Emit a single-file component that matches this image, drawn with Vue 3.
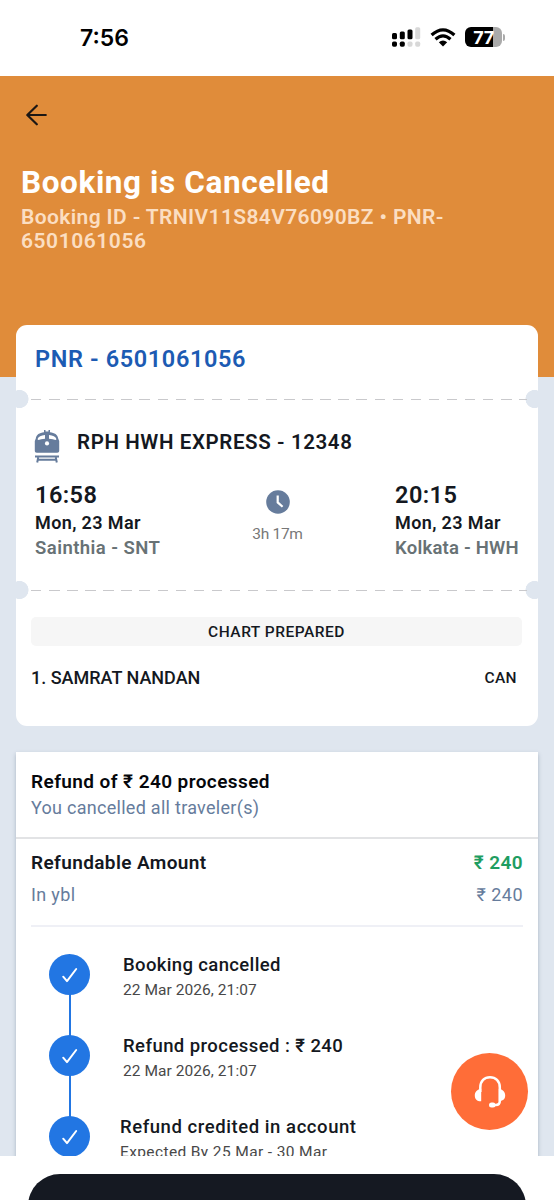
<script setup>
const stops = [
  { time: '16:58', date: 'Mon, 23 Mar', place: 'Sainthia - SNT' },
  { time: '20:15', date: 'Mon, 23 Mar', place: 'Kolkata - HWH' },
]
const steps = [
  { title: 'Booking cancelled', note: '22 Mar 2026, 21:07', key: 'cancelled' },
  { title: 'Refund processed : ₹ 240', note: '22 Mar 2026, 21:07', key: 'processed' },
  { title: 'Refund credited in account', note: 'Expected By 25 Mar - 30 Mar', key: 'credited' },
]
</script>

<template>
  <div class="screen">
    <div class="status">
      <span class="clock">7:56</span>
      <div class="indicators">
        <svg class="signal" width="29" height="20" viewBox="0 0 29 20">
          <rect x="0" y="6" width="5" height="6.3" rx="1.5" />
          <rect x="7.8" y="4.4" width="5" height="7.9" rx="1.5" />
          <rect x="15.5" y="2.4" width="5" height="9.9" rx="1.5" />
          <rect class="off" x="23.2" y="0.2" width="5" height="12" rx="1.5" />
          <rect x="0" y="14.6" width="5" height="5.2" rx="1.7" />
          <rect x="7.8" y="14.6" width="5" height="5.2" rx="1.7" />
          <rect class="off" x="15.5" y="14.6" width="5" height="5.2" rx="1.7" />
          <rect class="off" x="23.2" y="14.6" width="5" height="5.2" rx="1.7" />
        </svg>
        <svg class="wifi" width="26" height="19" viewBox="0 0 26 19">
          <path d="M1.600 7Q13-3.400 24.400 7" />
          <path d="M5.500 11.200Q13 4.400 20.500 11.200" />
          <path class="dot" d="M8.800 14.200Q13 10.600 17.200 14.200L13 18.400Z" />
        </svg>
        <div class="battery"><span class="level">77</span></div>
        <i class="nub"></i>
      </div>
    </div>

    <header class="hero">
      <svg class="back" width="22" height="22" viewBox="0 0 22 22">
        <path d="M10.800 1.700L1.300 11L10.800 20.300M1.500 11H19.800" />
      </svg>
      <h1>Booking is Cancelled</h1>
      <p class="ids"><span class="id1">Booking ID - TRNIV11S84V76090BZ • PNR-</span><br /><span class="id2">6501061056</span></p>
    </header>

    <main class="body">
      <section class="ticket">
        <div class="pnr"><span>PNR - 6501061056</span></div>
        <div class="perforation"></div>
        <div class="journey">
          <div class="train">
            <svg width="26" height="33" viewBox="0 0 26 33">
              <path class="fill" d="M10 0h1.500v1.600h3V0H16v2.200C20.500 2.700 23.700 4.600 24.200 8.500L25.200 11v9.800c0 1.300-.7 2-2 2H2.800c-1.300 0-2-.7-2-2V11l1-2.500C2.300 4.600 5.500 2.700 10 2.200Z" />
              <path class="glass" d="M3.800 10V8.600C4.500 6.400 7 5.200 11 4.900v3.800C8.200 9 6 9.400 3.800 10ZM22.200 10V8.600C21.500 6.400 19 5.200 15 4.900v3.800c2.800.3 5 .7 7.200 1.300Z" />
              <circle class="glass" cx="13" cy="13.400" r="2.100" />
              <path class="line" d="M1 26.400h24M3.200 32.500l1-5M22.800 32.500l-1-5M4 29.800h18" />
            </svg>
            <span>RPH HWH EXPRESS - 12348</span>
          </div>
          <div class="stops">
            <div class="stop from">
              <span class="time">{{ stops[0].time }}</span>
              <span class="date">{{ stops[0].date }}</span>
              <span class="place">{{ stops[0].place }}</span>
            </div>
            <div class="duration">
              <svg width="24" height="24" viewBox="0 0 24 24">
                <circle cx="12" cy="12" r="11.800" />
                <path d="M11.700 5.500v6.900l4.900 4.400" />
              </svg>
              <span>3h 17m</span>
            </div>
            <div class="stop to">
              <span class="time">{{ stops[1].time }}</span>
              <span class="date">{{ stops[1].date }}</span>
              <span class="place">{{ stops[1].place }}</span>
            </div>
          </div>
        </div>
        <div class="perforation"></div>
        <div class="chart"><span>CHART PREPARED</span></div>
        <div class="passenger">
          <span class="name">1. SAMRAT NANDAN</span>
          <span class="state">CAN</span>
        </div>
      </section>

      <section class="refund">
        <div class="summary">
          <div class="headline">Refund of ₹ 240 processed</div>
          <div class="sub">You cancelled all traveler(s)</div>
        </div>
        <div class="amounts">
          <div class="row total"><span>Refundable Amount</span><b>₹ 240</b></div>
          <div class="row part"><span>In ybl</span><em>₹ 240</em></div>
        </div>
        <ol class="timeline">
          <li v-for="s in steps" :key="s.key" :class="s.key">
            <div class="marker">
              <svg width="41" height="41" viewBox="0 0 41 41">
                <circle cx="20.5" cy="20.5" r="20.5" />
                <path d="M14.200 22.700L18 27.100L27.200 15" />
              </svg>
            </div>
            <div class="text">
              <span class="title">{{ s.title }}</span>
              <span class="note">{{ s.note }}</span>
            </div>
          </li>
        </ol>
      </section>

      <button class="help" aria-label="Help">
        <svg width="34" height="34" viewBox="0 0 34 34">
          <path class="band" d="M7.300 17V12.500C7.300 6 11.400 2.300 17 2.300s9.800 3.700 9.800 10.200V26c0 2.700-1.300 4-4 4h-4" />
          <path class="cup" d="M8.200 14v12.300C4.300 26.500 1.800 24.200 1.800 20.500S4.300 14.300 8.200 14ZM25.800 14v12.300c3.900-.2 6.400-2.100 6.400-5.800s-2.500-6.200-6.400-6.500Z" />
          <rect class="cup" x="16" y="27.500" width="6.500" height="5" rx="2.500" />
        </svg>
      </button>
    </main>

    <footer class="dock"><div class="sheet"></div></footer>
  </div>
</template>

<style>
body {
  background: #fff;
}
</style>

<style scoped>
* {
  box-sizing: border-box;
}
.screen {
  width: 554px;
  height: 1200px;
  overflow: hidden;
  display: flex;
  flex-direction: column;
  font-family: Roboto, 'Noto Sans', sans-serif;
  font-weight: 500;
  color: #141821;
  background: #fff;
  white-space: nowrap;
}
.status {
  height: 76px;
  flex: none;
  display: flex;
  justify-content: space-between;
  padding: 27px 49px 0 80px;
}
.clock {
  font: 600 23px/22px Inter, sans-serif;
  color: #000;
}
.indicators {
  display: flex;
  height: 20px;
  align-items: center;
}
.signal .off {
  fill: #d8d8d8;
}
.wifi {
  margin: 0 9px 0 9px;
}
.wifi path {
  fill: none;
  stroke: #000;
  stroke-width: 3.200;
}
.wifi .dot {
  fill: #000;
  stroke: none;
}
.battery {
  width: 37px;
  height: 20px;
  border-radius: 6px;
  background: linear-gradient(90deg, #000 28px, #aaa 28px);
  text-align: center;
}
.level {
  display: block;
  font: 700 18px/21px Inter, sans-serif;
  letter-spacing: -0.500px;
  color: #fff;
}
.nub {
  width: 2px;
  height: 7px;
  margin-left: 1px;
  border-radius: 0 2px 2px 0;
  background: #aaa;
}
.hero {
  height: 301px;
  flex: none;
  background: #e08c3a;
  padding: 28px 21px 0;
}
.back {
  display: block;
  margin-left: 5px;
}
.back path {
  fill: none;
  stroke: #1c1714;
  stroke-width: 2.200;
  stroke-linecap: round;
  stroke-linejoin: round;
}
h1 {
  margin: 38px 0 0;
  font-size: 31.500px;
  line-height: 37px;
  font-weight: 700;
  letter-spacing: 0.600px;
  color: #fff;
}
.ids {
  margin: 4px 0 0;
  font-size: 21px;
  line-height: 24px;
  color: #fbdec2;
  font-weight: 600;
}
.id1 {
  letter-spacing: 0.380px;
}
.id2 {
  letter-spacing: 0.550px;
}
.body {
  height: 831px;
  flex: none;
  position: relative;
  overflow: hidden;
  display: flex;
  flex-direction: column;
  gap: 26px;
  margin-top: -52px;
  padding: 0 16px;
  background: linear-gradient(transparent 52px, #dfe6ef 52px);
}
.ticket {
  height: 401px;
  flex: none;
  background: #fff;
  border-radius: 11px;
}
.pnr {
  height: 65px;
  padding: 20px 19px 0;
  font-size: 23.500px;
  line-height: 29px;
  font-weight: 600;
  letter-spacing: 0.620px;
  color: #1c5bb3;
}
.perforation {
  height: 18px;
  display: flex;
  align-items: center;
  background:
    radial-gradient(circle at 3.500px 9px, #dfe6ef 8.700px, transparent 9.300px),
    radial-gradient(circle at 518.500px 9px, #dfe6ef 8.700px, transparent 9.300px);
}
.perforation::before {
  content: '';
  height: 1px;
  width: 496px;
  margin-left: 15px;
  margin-top: 1px;
  background: repeating-linear-gradient(90deg, #c9c9cc 0 10.500px, transparent 10.500px 18.080px);
}
.journey {
  height: 173px;
  padding: 19px 19px 0;
}
.train {
  display: flex;
  align-items: center;
  height: 34px;
  gap: 17px;
  margin-left: -1px;
  font-size: 20.500px;
  line-height: 28px;
  font-weight: 600;
  letter-spacing: 0.610px;
}
.train svg {
  margin-top: 4px;
  overflow: visible;
}
.train span {
  margin-top: -4px;
}
.train .fill {
  fill: #667c9c;
}
.train .glass {
  fill: #fff;
}
.train .line {
  fill: none;
  stroke: #667c9c;
  stroke-width: 2;
}
.stops {
  display: flex;
  margin-top: 20px;
}
.stop {
  display: flex;
  flex-direction: column;
  width: 124px;
  font-weight: 600;
}
.time {
  font-size: 23.500px;
  line-height: 28px;
  letter-spacing: 0.450px;
}
.date {
  font-size: 18px;
  line-height: 28px;
  letter-spacing: 0.380px;
}
.place {
  font-size: 18.500px;
  line-height: 23px;
  letter-spacing: 0.450px;
  color: #687275;
}
.to .place {
  letter-spacing: 0.220px;
}
.duration {
  width: 236px;
  display: flex;
  flex-direction: column;
  align-items: center;
  padding-top: 9px;
  gap: 9px;
  font-size: 15.500px;
  line-height: 22px;
  font-weight: 400;
  letter-spacing: -0.300px;
  color: #777;
}
.duration svg {
  margin-left: 2px;
}
.duration span {
  margin-left: 1px;
}
.duration circle {
  fill: #667c9c;
}
.duration path {
  fill: none;
  stroke: #fff;
  stroke-width: 2.200;
}
.chart {
  margin: 18px 16px 0 15px;
  height: 29px;
  border-radius: 5px;
  background: #f6f6f6;
  text-align: center;
  font-size: 15.500px;
  line-height: 30px;
  letter-spacing: 0.500px;
}
.passenger {
  display: flex;
  justify-content: space-between;
  padding: 18px 21px 0 15px;
  line-height: 28px;
}
.name {
  font-size: 18px;
}
.state {
  font-size: 15.500px;
  letter-spacing: 0.400px;
}
.refund {
  height: 470px;
  flex: none;
  background: #fff;
  box-shadow: 0 2px 4px rgba(70, 85, 110, 0.35);
}
.summary {
  height: 87px;
  padding: 17px 15px 0;
  border-bottom: 2px solid #e2e3e5;
}
.headline {
  font-size: 19px;
  line-height: 26px;
  font-weight: 600;
  letter-spacing: 0.420px;
  color: #05070b;
}
.sub {
  font-size: 18px;
  line-height: 26px;
  font-weight: 400;
  letter-spacing: 0.280px;
  color: #667c9c;
}
.amounts {
  height: 88px;
  margin: 0 15px;
  padding-top: 8px;
  border-bottom: 2px solid #eff0f6;
}
.row {
  display: flex;
  justify-content: space-between;
  font-size: 18px;
  line-height: 32px;
}
.row em {
  font-style: normal;
  letter-spacing: 0.500px;
}
.total {
  font-size: 19px;
  font-weight: 600;
  letter-spacing: 0.380px;
}
.total b {
  color: #1e9d61;
  font-weight: 600;
}
.part {
  color: #667c9c;
  font-weight: 400;
  letter-spacing: 0.350px;
}
.timeline {
  list-style: none;
  margin: 0;
  padding: 26px 0 0 33px;
}
.timeline li {
  height: 81.300px;
  display: flex;
}
.marker {
  width: 41px;
  background: linear-gradient(#2276e3, #2276e3) 19.500px 20px / 2px 100% no-repeat;
}
.processed .marker,
.credited .marker {
  background-position: 19.500px 0;
}
.marker svg {
  display: block;
  margin-top: 0.500px;
}
.marker circle {
  fill: #2276e3;
}
.marker path {
  fill: none;
  stroke: #fff;
  stroke-width: 2;
  stroke-linecap: round;
  stroke-linejoin: round;
}
.text {
  display: flex;
  flex-direction: column;
  margin-left: 33px;
}
.credited .text {
  margin-top: -1px;
  margin-left: 30px;
}
.title {
  font-size: 18.500px;
  line-height: 24px;
  letter-spacing: 0.360px;
}
.processed .title {
  letter-spacing: 0.440px;
}
.credited .title {
  letter-spacing: 0.560px;
}
.note {
  font-size: 15.500px;
  line-height: 26px;
  font-weight: 400;
  letter-spacing: 0.060px;
  color: #484848;
}
.credited .note {
  letter-spacing: 0.380px;
}
.help {
  position: absolute;
  right: 26px;
  bottom: 26px;
  width: 77px;
  height: 77px;
  border: 0;
  border-radius: 50%;
  padding: 0;
  background: #ff6d38;
  display: grid;
  place-items: center;
}
.band {
  fill: none;
  stroke: #fff;
  stroke-width: 2.500;
}
.cup {
  fill: #fff;
}
.dock {
  height: 44px;
  flex: none;
  background: #fff;
  padding: 18px 28px 0;
  overflow: hidden;
}
.sheet {
  height: 90px;
  border-radius: 32px;
  background: #151922;
}
</style>
